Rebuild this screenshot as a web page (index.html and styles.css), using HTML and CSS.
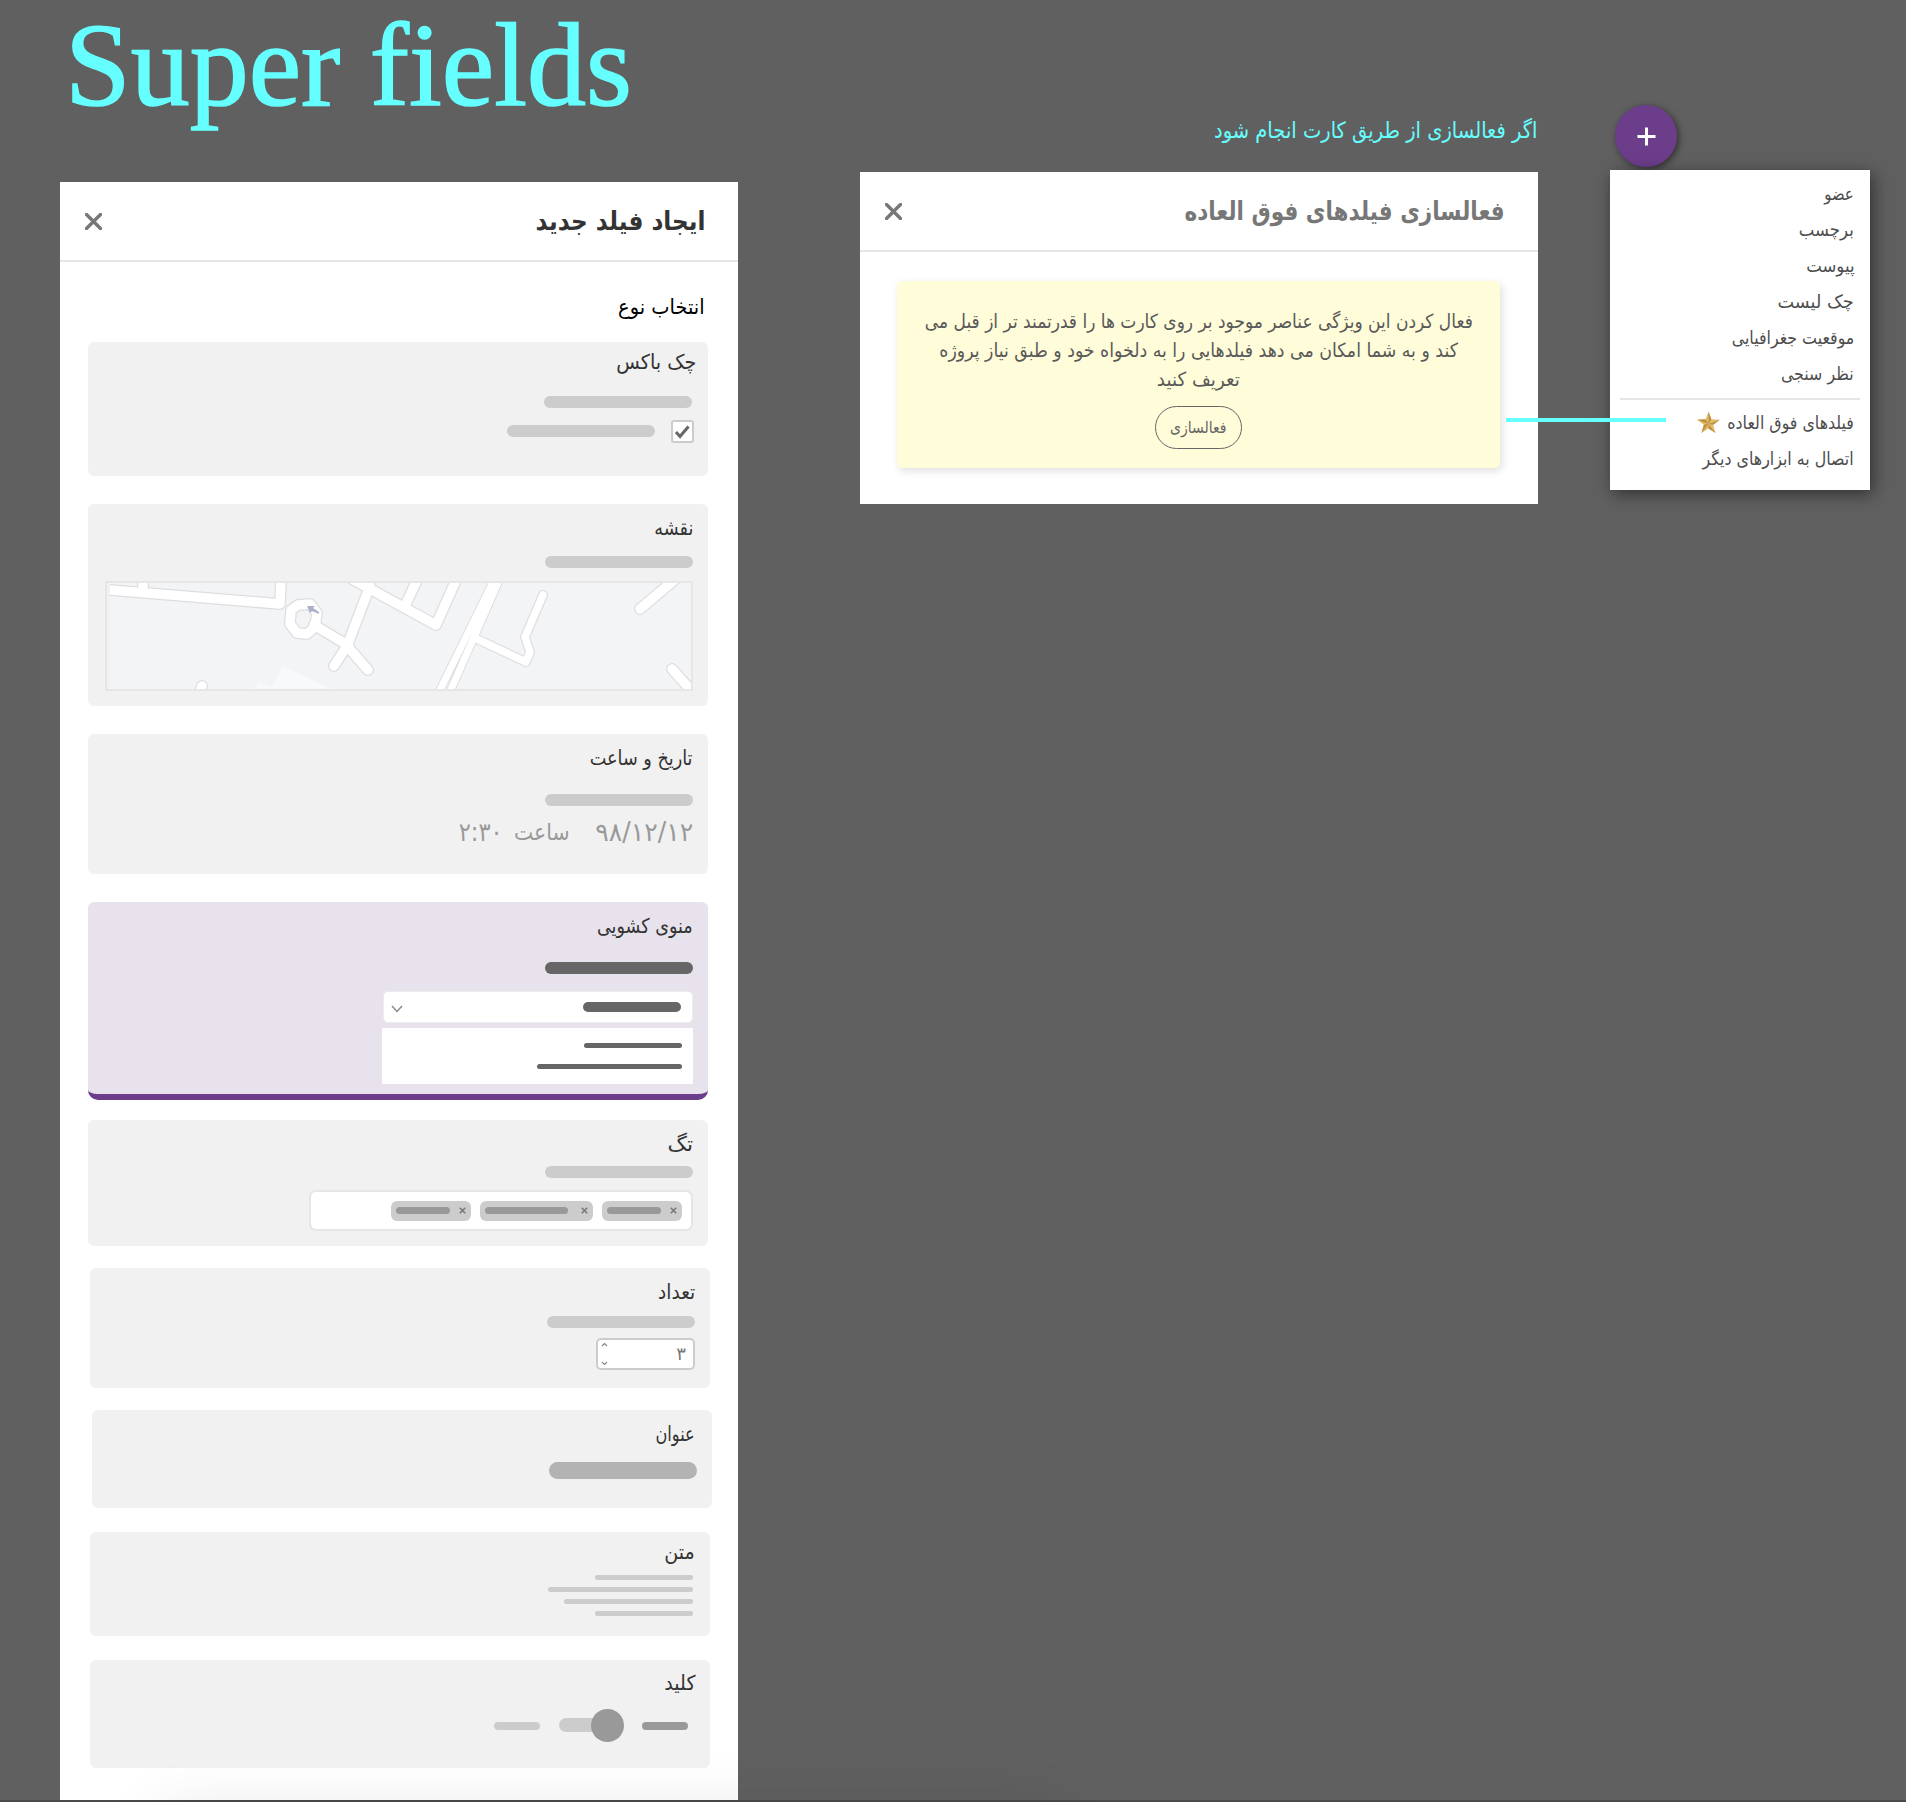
FILE: index.html
```html
<!DOCTYPE html>
<html lang="fa">
<head>
<meta charset="utf-8">
<title>Super fields</title>
<link rel="stylesheet" href="styles.css">
</head>
<body>
<div class="board">
  <section class="left">
    <h1 class="title">Super fields</h1>
    <div class="panel create" dir="rtl">
      <header class="panel-head"><h2><span class="t">ایجاد فیلد جدید</span></h2>
        <svg class="close" viewBox="0 0 17 17"><path d="M1.500 1.500l14 14M15.500 1.500l-14 14"/></svg></header>
      <div class="choose"><span class="t">انتخاب نوع</span></div>
      <div class="cards">
        <article class="card c-check">
          <h3><span class="t">چک باکس</span></h3>
          <i class="bar"></i>
          <div class="check-row"><span class="checkbox"><svg viewBox="0 0 19 19"><path d="M3 10l4 4.500 8.500-10"/></svg></span><i class="bar"></i></div>
        </article>
        <article class="card c-map">
          <h3><span class="t">نقشه</span></h3>
          <i class="bar"></i>
          <div class="map">
            <svg viewBox="107 583 584 106" preserveAspectRatio="none">
              <path class="park" d="M254 689l5-7 13 4 11-20 48 23z"/>
              <g class="edge">
                <path d="M104 589.500L280 604L281 580M143 592V580" stroke-width="12"/>
                <path d="M314 625L349 646M370 586L347 646L334 666M347 646L368 670" stroke-width="12"/>
                <path d="M350 578L436 625L457 578M405 606L418 578" stroke-width="12"/>
                <path d="M496 576L438 694M501 576L449 694" stroke-width="9"/>
                <path d="M477 639L526 662L530 652L525 637L543 595" stroke-width="10"/>
                <path d="M640 609L679 576M672 669L697 697M202 686L199 694" stroke-width="12"/>
                <path d="M298 605l12-1 7 9-2 14-8 7-10-1-7-9 1-14z" stroke-width="12"/>
              </g>
              <g class="road">
                <path d="M104 589.500L280 604L281 580M143 592V580" stroke-width="9.500"/>
                <path d="M314 625L349 646M370 586L347 646L334 666M347 646L368 670" stroke-width="9.500"/>
                <path d="M350 578L436 625L457 578M405 606L418 578" stroke-width="9.500"/>
                <path d="M496 576L438 694M501 576L449 694" stroke-width="7"/>
                <path d="M477 639L526 662L530 652L525 637L543 595" stroke-width="7.500"/>
                <path d="M640 609L679 576M672 669L697 697M202 686L199 694" stroke-width="9.500"/>
                <path d="M298 605l12-1 7 9-2 14-8 7-10-1-7-9 1-14z" stroke-width="9.500"/>
              </g>
              <path class="pin" d="M307 606l8 0-2 2 6 4v2l-7-3-2 2z"/>
              <path class="margin" d="M107 583h3v106h-3z"/>
            </svg>
          </div>
        </article>
        <article class="card c-date">
          <h3><span class="t">تاریخ و ساعت</span></h3>
          <i class="bar"></i>
          <div class="date"><span class="t day">۹۸/۱۲/۱۲</span><span class="t word">ساعت</span><span class="t hour">۲:۳۰</span></div>
        </article>
        <article class="card c-select">
          <h3><span class="t">منوی کشویی</span></h3>
          <i class="bar dark"></i>
          <div class="select"><i></i><svg viewBox="0 0 12 8"><path d="M1 1l5 5.500 5-5.500"/></svg></div>
          <div class="options"><i></i><i class="wide"></i></div>
        </article>
        <article class="card c-tag">
          <h3><span class="t">تگ</span></h3>
          <i class="bar"></i>
          <div class="tags">
            <span class="tag"><svg viewBox="0 0 7 7"><path d="M.8.8l5.400 5.400M6.200.8L.8 6.200"/></svg><i></i></span>
            <span class="tag long"><svg viewBox="0 0 7 7"><path d="M.8.8l5.400 5.400M6.200.8L.8 6.200"/></svg><i></i></span>
            <span class="tag"><svg viewBox="0 0 7 7"><path d="M.8.8l5.400 5.400M6.200.8L.8 6.200"/></svg><i></i></span>
          </div>
        </article>
        <article class="card c-number">
          <h3><span class="t">تعداد</span></h3>
          <i class="bar"></i>
          <div class="number"><span>۳</span><svg viewBox="0 0 7 24"><path d="M1 4l2.500-2.500L6 4M1 20l2.500 2.500L6 20"/></svg></div>
        </article>
        <article class="card c-title">
          <h3><span class="t">عنوان</span></h3>
          <i class="bar thick"></i>
        </article>
        <article class="card c-text">
          <h3><span class="t">متن</span></h3>
          <div class="lines"><i></i><i></i><i></i><i></i></div>
        </article>
        <article class="card c-switch">
          <h3><span class="t">کلید</span></h3>
          <div class="switch-row"><i class="on"></i><span class="switch"></span><i></i></div>
        </article>
      </div>
    </div>
  </section>

  <section class="middle" dir="rtl">
    <p class="caption"><span class="t">اگر فعالسازی از طریق کارت انجام شود</span></p>
    <div class="panel activate">
      <header class="panel-head"><h2><span class="t">فعالسازی فیلدهای فوق العاده</span></h2>
        <svg class="close" viewBox="0 0 17 17"><path d="M1.500 1.500l14 14M15.500 1.500l-14 14"/></svg></header>
      <div class="notice">
        <p><span class="t">فعال کردن این ویژگی عناصر موجود بر روی کارت ها را قدرتمند تر از قبل می</span></p>
        <p><span class="t">کند و به شما امکان می دهد فیلدهایی را به دلخواه خود و طبق نیاز پروژه</span></p>
        <p><span class="t">تعریف کنید</span></p>
        <button><span class="t">فعالسازی</span></button>
      </div>
    </div>
  </section>

  <section class="right" dir="rtl">
    <div class="fab"><svg viewBox="0 0 20 20"><path d="M10 .5v19M.5 10h19"/></svg></div>
    <ul class="menu">
      <li><span class="t">عضو</span></li>
      <li><span class="t">برچسب</span></li>
      <li><span class="t">پیوست</span></li>
      <li><span class="t">چک لیست</span></li>
      <li><span class="t">موقعیت جغرافیایی</span></li>
      <li><span class="t">نظر سنجی</span></li>
      <li class="rule"></li>
      <li><span class="t">فیلدهای فوق العاده</span>
        <svg class="star" viewBox="0 0 24 24"><path fill="#e6bd68" d="M12 .5l3 8.200 8.800.3-6.900 5.400 2.400 8.600-7.300-4.800L4.700 23l2.400-8.600L.2 9l8.800-.3z"/><path fill="#bd9044" d="M12 .5v13l3-4.800zM23.800 9L12 13.500l4.900.9zM19.300 23L12 13.500v4.700zM4.700 23L12 13.500l-4.900.9zM.2 9L12 13.500 9 8.700z"/></svg></li>
      <li><span class="t">اتصال به ابزارهای دیگر</span></li>
    </ul>
  </section>
  <div class="connector"></div>
  <div class="dock"></div>
</div>
</body>
</html>
```

FILE: styles.css
```css
* { box-sizing: border-box; margin: 0; padding: 0; }
body { background: #606060; font-family: "DejaVu Sans", sans-serif; }
i { display: block; }
svg { display: block; fill: none; }
.board { position: relative; width: 1906px; height: 1802px; overflow: hidden; display: flex; align-items: flex-start; }

.t { display: inline-block; transform: scaleX(var(--k, .88)); transform-origin: right center; }

.left { width: 860px; padding-left: 60px; }
.title { height: 182px; padding: 0 0 0 5px; font: 400 118px/132px "Liberation Serif", serif; color: #6ff; white-space: nowrap; text-rendering: optimizeLegibility; font-variant-ligatures: common-ligatures; -webkit-text-stroke: 1.500px #6ff; }
.panel { background: #fff; }
.create { width: 678px; height: 1618px; }
.panel-head { display: flex; justify-content: space-between; align-items: center; height: 80px; padding: 0 33px 0 25px; border-bottom: 2px solid #e6e6e6; }
.panel-head h2 { --k: .892; font-size: 26px; font-weight: 700; line-height: 36px; color: #333; white-space: nowrap; }
.close { width: 17px; height: 17px; stroke: #777; stroke-width: 3.400; stroke-linecap: round; }
.choose { --k: .924; height: 80px; padding: 30px 33px 0 0; font-size: 21px; line-height: 30px; color: #000; }

.cards { display: flex; flex-direction: column; padding-right: 30px; }
.card { display: flex; flex-direction: column; width: 620px; padding-right: 15px; border-radius: 6px; background: #f1f1f1; }
.card h3 { height: 28px; font-size: 20.500px; font-weight: 400; line-height: 28px; color: #333; white-space: nowrap; }
.bar { width: 148px; height: 12px; border-radius: 6px; background: #ccc; }
.bar.dark { background: #666; }
.bar.thick { height: 17px; border-radius: 8.500px; background: #b3b3b3; }

.c-check { --k: .938; height: 134px; padding: 6px 12px 0 0; margin-bottom: 28px; }
.c-check > .bar { margin: 20px 4px 0 0; }
.check-row { display: flex; align-items: flex-start; gap: 16px; margin: 12px 2px 0 0; }
.check-row .bar { margin-top: 5px; }
.checkbox { width: 23px; height: 23px; border: 2px solid #ccc; border-radius: 3px; background: #fff; }
.checkbox svg { width: 19px; height: 19px; stroke: #666; stroke-width: 3; }

.c-map { --k: .86; height: 202px; padding-top: 10px; margin-bottom: 28px; }
.c-map .bar { margin-top: 14px; }
.map { width: 588px; height: 110px; margin-top: 13px; border: 2px solid #e6e6e6; background: #f3f4f6; overflow: hidden; }
.map svg { width: 584px; height: 106px; }
.edge, .road { stroke-linecap: round; stroke-linejoin: round; }
.edge { stroke: #dedee2; }
.road { stroke: #fff; }
.park { fill: #f8f9fb; }
.pin { fill: #abb0c9; }
.margin { fill: #f1f1f1; }

.c-date { --k: .86; height: 140px; padding-top: 10px; margin-bottom: 28px; }
.c-date .bar { margin-top: 22px; }
.date { display: flex; margin-top: 8px; font-size: 26px; line-height: 36px; color: #999; }
.day { --k: .967; }
.word { --k: .887; margin-right: 22px; font-size: 23px; }
.hour { --k: .868; margin-right: 4px; }

.c-select { --k: .857; height: 198px; padding-top: 10px; margin-bottom: 20px; border-bottom: 6px solid #6c3d8b; border-radius: 6px 6px 10px 10px; background: #e8e2ed; }
.c-select .bar { margin-top: 22px; }
.select { display: flex; align-items: center; justify-content: space-between; width: 310px; height: 32px; margin-top: 17px; padding: 0 11px 0 7px; border: 1px solid #ececec; border-radius: 5px; background: #fff; }
.select i { width: 98px; height: 10px; border-radius: 5px; background: #666; }
.select svg { width: 12px; height: 8px; margin-top: 4px; stroke: #888; stroke-width: 1.500; }
.options { width: 311px; height: 56px; margin-top: 5px; padding: 15px 11px 0 0; background: #fff; }
.options i { width: 98px; height: 5px; margin-bottom: 16px; border-radius: 2.500px; background: #666; }
.options .wide { width: 145px; }

.c-tag { --k: 1.06; height: 126px; padding-top: 10px; margin-bottom: 22px; }
.c-tag .bar { margin-top: 8px; }
.tags { display: flex; align-items: center; gap: 9px; width: 384px; height: 41px; margin-top: 12px; padding-right: 9px; border: 2px solid #e6e6e6; border-radius: 7px; background: #fff; }
.tag { display: flex; align-items: center; justify-content: space-between; width: 80px; height: 20px; padding: 0 5px; border-radius: 6px; background: #ccc; }
.tag i { width: 54px; height: 7px; border-radius: 3.500px; background: #999; }
.tag svg { width: 7px; height: 7px; stroke: #777; stroke-width: 1.600; }
.tag.long { width: 113px; }
.tag.long i { width: 83px; }

.c-number, .c-text, .c-switch { margin-right: -2px; }
.c-number { --k: .9; height: 120px; padding-top: 10px; margin-bottom: 22px; }
.c-number .bar { margin-top: 10px; }
.number { display: flex; justify-content: space-between; align-items: center; width: 99px; height: 32px; margin-top: 10px; padding: 0 7px 0 3px; border: 2px solid #ccc; border-radius: 5px; background: #fff; font-size: 18px; line-height: 28px; color: #777; }
.number svg { width: 7px; height: 24px; stroke: #888; stroke-width: 1.200; }

.c-title { --k: .79; height: 98px; padding-top: 10px; margin: 0 -4px 24px 0; }
.c-title h3 { padding-right: 2px; }
.c-title .bar { margin-top: 14px; }

.c-text { --k: .93; height: 104px; padding-top: 6px; margin-bottom: 24px; }
.lines { display: flex; flex-direction: column; gap: 7px; margin: 9px 2px 0 0; }
.lines i { width: 98px; height: 5px; border-radius: 2.500px; background: #ccc; }
.lines i:nth-child(2) { width: 145px; }
.lines i:nth-child(3) { width: 129px; }

.c-switch { --k: .93; height: 108px; padding-top: 9px; }
.switch-row { display: flex; align-items: center; gap: 18px; margin: 12px 7px 0 0; }
.switch-row i { width: 46px; height: 8px; border-radius: 4px; background: #ccc; }
.switch-row i.on { background: #999; }
.switch-row i:last-child { margin-right: 1px; }
.switch { position: relative; width: 65px; height: 33px; }
.switch::before { content: ""; position: absolute; left: 0; top: 9px; width: 50px; height: 14px; border-radius: 7px; background: #ccc; }
.switch::after { content: ""; position: absolute; right: 0; top: 0; width: 33px; height: 33px; border-radius: 50%; background: #999; }

.middle { width: 678px; }
.caption { --k: .866; height: 172px; padding: 112px 1px 0 0; font-size: 22.500px; line-height: 36px; color: #6ff; white-space: nowrap; }
.activate { height: 332px; }
.activate h2 { --k: .828; color: #777; }
.notice { display: flex; flex-direction: column; align-items: center; width: 603px; height: 187px; margin: 29px 38px 0 0; padding-top: 26px; border-radius: 5px; background: #fffcd9; box-shadow: 2px 3px 8px rgba(0,0,0,.13); color: #595959; }
.notice .t { transform-origin: center; }
.notice p { --k: .873; font-size: 19.500px; line-height: 29px; white-space: nowrap; }
.notice p:nth-child(2) { --k: .889; }
.notice p:nth-child(3) { --k: .936; }
.notice button { --k: .876; width: 87px; height: 43px; margin-top: 12px; border: 1.500px solid #666; border-radius: 21.500px; background: none; font: 16px "DejaVu Sans", sans-serif; color: #666; }

.right { margin-left: 72px; padding-top: 105px; }
.fab { display: flex; align-items: center; justify-content: center; width: 62px; height: 62px; margin: 0 193px 3px 0; border-radius: 50%; background: #6c3d8b; box-shadow: 2px 2px 7px rgba(0,0,0,.5); }
.fab svg { width: 19px; height: 19px; stroke: #fff; stroke-width: 3.200; }
.menu { width: 260px; height: 320px; padding: 5px 16px 0 0; list-style: none; background: #fff; box-shadow: 3px 4px 16px rgba(0,0,0,.5); font-size: 18px; color: #4d4d4d; }
.menu li { display: flex; align-items: center; height: 36px; white-space: nowrap; }
.menu li:nth-child(1) { --k: .826; }
.menu li:nth-child(2), .menu li:nth-child(3) { --k: .92; }
.menu li:nth-child(4) { --k: .98; }
.menu .rule { width: 240px; height: 2px; margin: 7px -6px 4px 0; background: #e6e6e6; }
.star { width: 23px; height: 23px; margin-right: -10px; }
.connector { position: absolute; left: 1506px; top: 418px; width: 160px; height: 4px; background: #6ff; }
.dock { position: absolute; left: 0; top: 1800px; width: 1906px; height: 2px; background: #4a4a4a; }
.dock::before { content: ""; position: absolute; left: 160px; top: 10px; width: 900px; height: 60px; box-shadow: 0 0 60px rgba(0,0,0,.1); }
```
